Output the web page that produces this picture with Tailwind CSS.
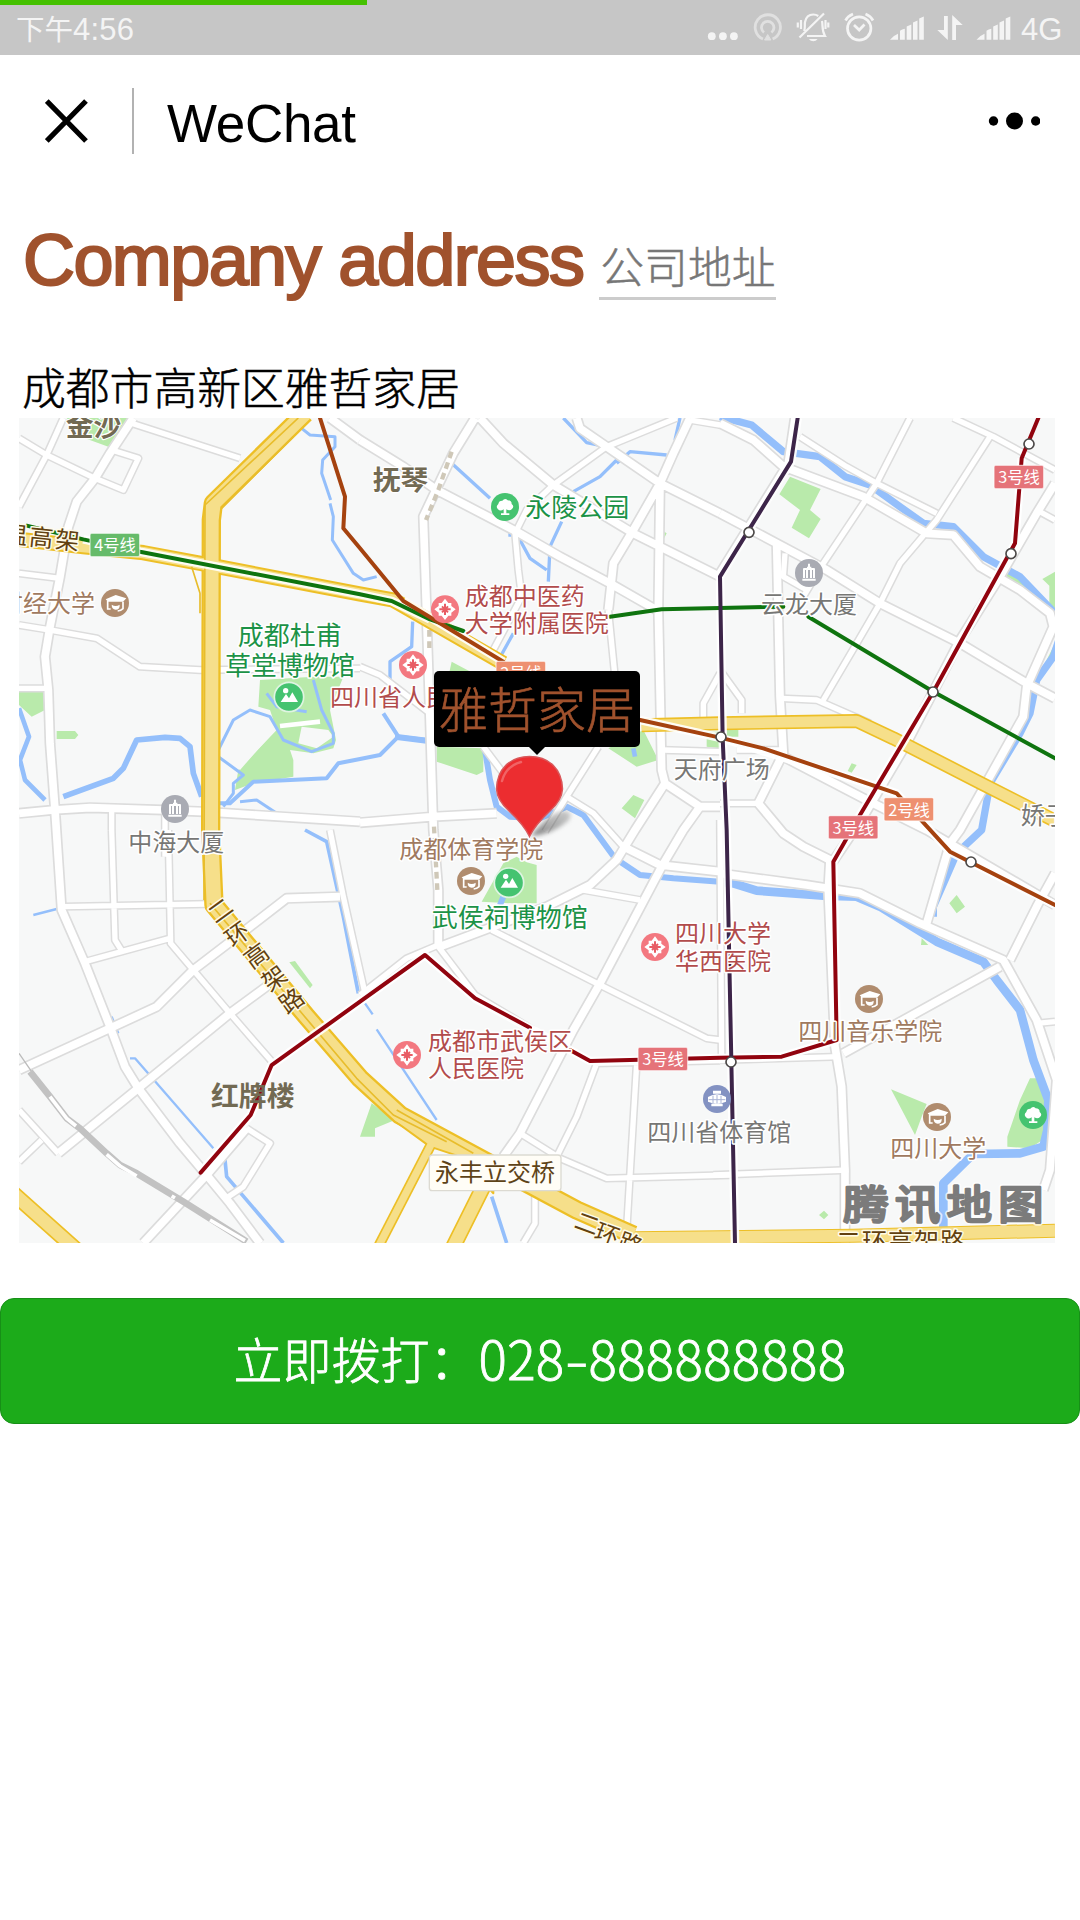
<!DOCTYPE html>
<html lang="zh-CN">
<head>
<meta charset="utf-8">
<title>WeChat</title>
<script src="https://cdn.jsdelivr.net/npm/@tailwindcss/browser@4"></script>
</head>
<body class="flex h-[1920px] w-[1080px] flex-col overflow-hidden bg-white font-['Liberation_Sans','Noto_Sans_CJK_SC',sans-serif] text-black">

<!-- Status bar -->
<div class="relative flex h-[55px] shrink-0 items-center justify-between bg-[#c6c6c6] pl-4 text-[31px] text-[#f4f4f4]">
  <div class="absolute top-0 left-0 h-[5px] w-[367px] bg-[#45c101]"></div>
  <div class="flex items-baseline pt-1 leading-[50px]"><span class="text-[28.500px]">下午</span><span class="tracking-[0.2px]">4:56</span></div>
  <div class="flex h-[55px] items-center">
    <svg class="h-[55px] w-[45px]" viewBox="705 0 45 55" fill="#f4f4f4"><circle cx="711.8" cy="36.2" r="3.9"/><circle cx="722.9" cy="36.2" r="3.9"/><circle cx="733.9" cy="36.2" r="3.9"/></svg>
    <svg class="h-[55px] w-[40px]" viewBox="750 0 40 55" fill="none" stroke="#e0e0e0" stroke-width="2.8"><path d="M763 39a12.6 12.6 0 1 1 9.6 0M764 32.5a6.2 6.2 0 1 1 7.4 0"/><path d="M767.7 34.5l3.2 5.5h-6.4z" fill="#e0e0e0" stroke-width="1"/></svg>
    <svg class="h-[55px] w-[45px]" viewBox="790 0 45 55" fill="none" stroke="#f4f4f4" stroke-width="2.2"><path d="M804 31c1.500-3 .5-6 1-9 1-5 4-7.500 8.300-7.500 2 0 3.500.5 5 1.500M822 21c1 4-.5 9 3 15h-18M824 13.500L799.500 37.500M801 20v9M797.800 22.500v5M825.500 20v9M828.300 22.500v5"/><path d="M809 39h8.500c-2 3-6.500 3-8.500 0z" fill="#f4f4f4" stroke="none"/></svg>
    <svg class="h-[55px] w-[50px]" viewBox="835 0 50 55" fill="none" stroke="#f4f4f4" stroke-width="2.700"><circle cx="859.200" cy="28.500" r="11.700"/><path d="M845.500 20.500q2.500-4.500 7.500-6.500M873 20.500q-2.500-4.500-7.500-6.500M854 25l5.200 5 5.300-5.500"/></svg>
    <svg class="h-[55px] w-[45px]" viewBox="885 0 45 55" fill="#f4f4f4"><path id="signal" d="M890 39.700q3-4 8-6v6zM900 39.700v-9q2-1.500 4.800-2v11zM906.700 39.700V26.500l4.600-2v15.200zM913 39.700V22.500l4.500-2v19.200zM919.200 39.700V18.500l4.600-2v23.200z"/></svg>
    <svg class="h-[55px] w-[42px]" viewBox="930 0 42 55" fill="#f4f4f4"><path d="M944 16h3.800v24L937.300 30H944zM952.200 40V15l10.500 10H956v15z"/></svg>
    <svg class="h-[55px] w-[48px]" viewBox="971.5 0 48 55" fill="#f4f4f4"><use href="#signal" x="86"/></svg>
    <span class="w-[60px] pt-1.5 pl-px">4G</span>
  </div>
</div>

<!-- Title bar -->
<header class="flex h-[132px] shrink-0 items-center pr-[40px] pl-[45px]">
  <svg class="h-[44px] w-[44px]" viewBox="0 0 44 44" stroke="#000" stroke-width="5.200"><path d="M1.800 2L41 42M41 2L1.800 42"/></svg>
  <div class="ml-[43px] h-[66px] w-[2px] bg-[#b2b2b2]"></div>
  <div class="ml-[33px] grow pt-1 text-[53px] leading-none tracking-[-0.3px]">WeChat</div>
  <svg class="h-[20px] w-[52px]" viewBox="0 0 52 20"><circle cx="5.500" cy="10" r="4.700"/><circle cx="26.500" cy="10" r="8.500"/><circle cx="47.700" cy="10" r="4.700"/></svg>
</header>

<main class="flex flex-col">
  <h1 class="flex h-[113px] items-start pt-[33px] pl-[23px]">
    <span class="text-[72px] leading-[80px] tracking-[-1.600px] text-[#a0522d] [-webkit-text-stroke:2.2px_#a0522d]">Company address</span>
    <span class="mt-[19px] ml-[16px] h-[61px] border-b-[3px] border-[#ccc] pl-px text-[43.800px] leading-[59px] font-light text-[#777] [-webkit-text-stroke:0.5px_#777]">公司地址</span>
  </h1>
  <p class="h-[118px] pt-[61px] pl-[22px] text-[43.800px] leading-[58px] font-light [-webkit-text-stroke:0.5px_#000]">成都市高新区雅哲家居</p>

  <!-- Map -->
  <section class="relative ml-[19px] h-[825px] w-[1036px] overflow-hidden bg-[#f7f8f8]">
    <svg class="block h-[825px] w-[1036px]" viewBox="57 1254 3108 2475" font-family="'Noto Sans CJK SC',sans-serif" fill="none" stroke-linejoin="round">
      <defs>
        <g id="minor">
          <path transform="translate(0 1230)" d="M57 85L140 135 285 205 370 240 415 145 335 120M190 24L140 135 57 290M390 38L720 145M57 490L180 505M57 645L150 660 290 685 420 770 600 780 1080 775M57 835H145M335 1205V1260M495 1205V1340"/>
          <path transform="translate(1080 1230)" d="M0 770L60 795 210 910M950 24L740 110 580 225 500 300 465 370 475 480 485 560 400 720M745 600L765 800M990 30L1080 45M370 1010L430 1090M715 1010L620 1160 555 1265M620 1160L700 1210 790 1310M910 1020L1080 1025M1030 960V880L1080 790"/>
          <path transform="translate(2160 1230)" d="M570 24L470 220 310 460 250 560M240 80L380 170 470 220 650 310M700 24L820 80 1005 180M810 80L650 330 540 460 480 580 410 700 310 870M195 430L190 500 260 540M185 865L290 870 450 940M950 300L1005 330M0 780L65 870V910M50 1020H190M0 1180H115"/>
          <path transform="translate(0 2490)" d="M335 0L345 330 370 370M505 0L512 340 580 420 690 550 820 700M190 230L620 222M255 395L510 325M57 840L175 970M57 995L125 930M740 895L810 940 730 1070 685 1100M990 0L1030 200 1095 490"/>
          <path transform="translate(1080 2490)" d="M395 300L720 465 1040 625 1080 630M480 910L600 985 740 1045 1110 1035M710 700L650 860 590 980M830 700L800 1200M235 350L345 495 520 600M525 1080V1180L490 1239M670 180L840 210M700 700L1080 692M0 495L140 385 235 345"/>
          <path transform="translate(2160 2490)" d="M-20 1035L385 1020M0 690L360 680M1005 575L950 580M0 -30L5 700"/>
        </g>
        <g id="major">
          <path transform="translate(0 1230)" d="M400 24L330 130 285 205 230 275 205 350 180 500 150 650 135 740 145 840 150 1000 165 1200 185 1500 255 1660 330 1850 375 1970 415 2035 540 2200 620 2295 690 2380 780 2500M57 1210L160 1200 270 1193 490 1200 610 1205 1080 1235M990 24L1080 90"/>
          <path transform="translate(1080 1230)" d="M0 90L130 170 230 240 470 365 600 440 750 520 890 600M345 24L280 130 190 320 200 620 210 930 220 1260 235 1440V1610M0 1238L220 1220 410 1210M360 24L430 100 580 225 820 370 1080 500M650 24L660 55 740 110 900 220 1080 310M990 24L940 130 900 220 820 360 760 460 745 600M900 220L895 600 905 1080 915 1120 1020 1190H1080M915 1120L825 1260 770 1350 690 1425 560 1490 240 1610M1020 1190L970 1260 905 1370 720 1720 640 1860 480 2170 430 2240M790 1310L900 1365 1080 1385"/>
          <path transform="translate(2160 1230)" d="M0 40L100 90 190 170 430 260 620 370 700 375 780 470 900 540 990 610 1000 650 920 830 910 920 720 1260 690 1300 620 1540M0 310L170 400 320 480 480 580 720 700 920 820 1005 865M170 400L180 860 190 1030 115 1180 190 1270 250 1310 330 1350M1005 220L950 310 840 500 720 690 560 1000 430 1220 335 1360M190 1040L440 1170 620 1260 1005 1485M225 24L205 160 0 490M0 1390L260 1425 420 1450 600 1540 850 1650 950 1830 1010 2010 990 2280 970 2340"/>
          <path transform="translate(0 2490)" d="M57 720L330 595 470 530 580 420 750 290 860 205 1020 200M175 970L415 775 690 550 840 440M430 1239L620 1035 740 895"/>
          <path transform="translate(2160 2490)" d="M330 90L325 180 345 650 365 770 375 1020V1239M1005 130L950 230 870 390M840 410L370 670"/>
        </g>
        <g id="ring">
          <path d="M915 1240L640 1510 634 1560 632 2490 642 2715 920 3050 1080 3235 1200 3345 1450 3480 1730 3630 1900 3705" stroke-width="44"/>
          <path d="M1900 3715L2560 3707 3165 3692" stroke-width="36"/>
          <path d="M1925 2176L2160 2170 2570 2163 2680 2215 2940 2348 3170 2465" stroke-width="32"/>
          <path d="M57 1618L250 1640 430 1658 600 1690 1080 1782 1180 1800 1510 1990" stroke-width="34"/>
          <path d="M40 3580L230 3750M1450 3560L1360 3740" stroke-width="38"/>
          <path d="M1295 3430L1135 3740" stroke-width="22"/>
        </g>
        <g id="metro">
          <path stroke="#0f740f" d="M80 1577L250 1618 420 1655 1080 1783 1175 1803 1290 1858 1390 1893M1830 1850L1985 1828 2160 1824 2350 1820M2425 1850L2800 2075 3165 2275"/>
          <path stroke="#a5420f" d="M960 1254L1035 1490 1030 1585 1080 1645 1210 1803 1510 1985M1920 2160L2160 2213 2290 2245 2630 2360 2690 2380 2850 2555 3165 2715"/>
          <path stroke="#91040f" d="M3115 1254L3065 1375 3045 1630 2800 2075 2580 2445 2500 2585 2510 3120 2345 3170 2160 3173 1770 3183 1710 3150M1590 3083L1425 2995 1275 2865 815 3195 752 3345 602 3518"/>
          <path stroke="#3d2549" d="M2393 1254L2373 1385 2160 1730 2168 2215 2180 2490 2205 3729"/>
        </g>
        <g id="hospital"><circle r="42" fill="#f37880"/><path d="M0-32L10-19 19-19 19-10 32 0 19 10 19 19 10 19 0 32-10 19-19 19-19 10-32 0-19-10-19-19-10-19z" fill="#fff"/><path d="M0-17V17M-17 0H17M-9-9L9 9M9-9L-9 9" stroke="#e85c64" stroke-width="6"/></g>
        <g id="school"><circle r="42" fill="#b08c6e"/><path d="M-22-8V20M-22 18H-13M24-4V17Q18 23 8 24" stroke="#fff" stroke-width="5"/><path d="M-28-11L2-24 34-14 24-4H-20z" fill="#fff"/><path d="M-10 5Q2 13 14 5Q15 20 2 20Q-10 19-10 5z" fill="#fff"/></g>
        <g id="tree"><circle r="42" fill="#45c370"/><path d="M-4 7Q-14 14-21 7Q-29-1-20-9Q-19-19-8-19Q0-28 8-20Q20-20 20-9Q29-2 21 6Q14 13 4 7V19H13V24H-12V19H-4z" fill="#fff"/></g>
        <g id="sight"><circle r="44" fill="#45c370" stroke="#dff4e2" stroke-width="5"/><circle cx="-10" cy="-19" r="8" fill="#fff"/><path d="M-25 15L-9-9 0 4 10-14 27 15z" fill="#fff"/></g>
        <g id="building"><circle r="42" fill="#a9abb3"/><path d="M-20 20H20M-15 15V-12H15V15M-6-16H7M-6-10V15M6-10V15M0-28V-18" stroke="#fff" stroke-width="6"/></g>
        <g id="stop"><circle r="15" fill="#fff" stroke="#4c4948" stroke-width="5"/></g>
      </defs>

      <!-- Parks -->
      <g fill="#b9eaab">
        <path transform="translate(0 1230)" d="M200 24H390L325 110 255 85zM57 845H135V900L95 920 57 885zM170 963H225L235 975 225 987H170zM780 810L940 800H1030L990 900 1008 990 1000 1015 940 1030 870 1020 880 1050V1100L760 1120 705 1140 715 1080 830 960 810 900 775 890z"/>
        <path transform="translate(1080 1230)" d="M275 755L360 800H265zM230 1010L370 1015V1085L350 1095 230 1055zM745 1015L850 960 895 1050 830 1070zM820 1155L853 1170 825 1225 785 1195zM905 360L920 370 905 400zM1040 965H1080V1015L1040 1010z"/>
        <path transform="translate(2160 1230)" d="M210 200L302 237 270 300 302 327 267 385 215 353 240 300 178 253zM1005 485L967 507 988 527V590L1005 620zM395 1060L410 1065 395 1088 383 1083zM840 480L900 505 970 580 850 500zM20 960H55V980H20zM1005 700L975 760 1005 740z"/>
        <path transform="translate(0 2490)" d="M868 397L885 393 938 465 930 475z"/>
        <path transform="translate(1080 2490)" d="M430 100L470 80 500 97 530 105V220H460L365 215zM0 920L35 820 105 870 45 895V920z"/>
        <path transform="translate(2160 2490)" d="M513 778L620 822 605 860 585 915zM930 745H950L985 820 975 925 930 955 862 950V920L900 810zM710 195L735 230 710 250 688 220zM312 1142L325 1155 312 1168 297 1155zM605 325L625 345H603z"/>
      </g>
      <path d="M905 2180L985 2190 1000 2210 950 2245 895 2230zM705 2150L755 2135 805 2145 825 2190 720 2310 665 2260z" fill="#f7f8f8"/>
      <path d="M840 2178L960 2165" stroke="#fff" stroke-width="14"/>

      <!-- Rivers -->
      <g stroke="#94bffb">
        <g transform="translate(0 1230)"><path stroke-width="14" d="M57 895L87 980 60 1050 75 1110 135 1170"/><path stroke-width="17" d="M190 1160L340 1105 370 1075 410 990 495 982 540 985 570 1010 580 1090 605 1160"/><path stroke-width="12" d="M655 1180H690L760 1115 980 1105 1015 1060 1080 1047 1140 1035 1195 980 1280 990M1195 980L1150 910"/><path stroke-width="9" d="M905 55L930 75 1005 80V110L968 150 965 190 992 270M990 280L1000 320 997 390 1060 490 1090 510 1130 500M655 1020L700 930 750 900 810 920 850 990 935 1025 1000 1000V970L965 900 940 810M655 1040L730 1095 700 1120V1150L670 1190M720 1175L770 1170 830 1210 890 1232M800 850L830 890 920 905"/></g>
        <g transform="translate(1080 1230)"><path stroke-width="10" d="M610 24L680 98 730 108M275 160L390 265M770 150L720 200 640 245M920 135L810 125 770 160M960 24L945 90M605 335L570 410 565 515M450 365V380M480 390L510 445 560 480M460 670L410 760M158 635L155 710 90 755V815"/><path stroke-width="18" d="M375 1020L390 1110 410 1190 450 1220 540 1225 620 1190 670 1215 765 1345 840 1395 940 1405 1080 1415M105 980L200 992"/><path d="M820 1015L825 1040" stroke-width="14"/></g>
        <g transform="translate(2160 1230)"><path stroke-width="22" d="M0 20L95 45 190 125 300 140 375 200 450 225 540 290 610 340 700 350 790 440 900 500 1010 615M1020 680L1000 740 950 810 930 910 900 970 810 1120 785 1260 710 1330 640 1490V1520" stroke-linejoin="round"/></g>
        <path transform="translate(2160 2490)" stroke-width="26" d="M0 155L40 160 110 182 310 197 410 200 480 230 650 335 790 395 830 450 900 540 940 690 985 810 982 900 970 950 900 970 760 972 670 1060V1190"/>
        <g transform="translate(0 2490)" stroke-width="7"><path d="M100 255L170 237M335 560L355 610M390 685H405L640 955M1095 520L1118 553M1130 598L1310 870"/><path stroke-width="11" d="M675 990L680 1040 850 1239M915 0L980 35 1030 260 1075 490M1475 1100L1520 1239"/><path d="M1500 225L1510 200" stroke-width="18"/></g>
      </g>

      <!-- Streets -->
      <use href="#minor" stroke="#dcdcdc" stroke-width="25"/>
      <use href="#major" stroke="#dcdcdc" stroke-width="33"/>
      <use href="#minor" stroke="#fff" stroke-width="16"/>
      <use href="#major" stroke="#fff" stroke-width="23"/>

      <!-- Railway -->
      <g transform="translate(0 2490)"><path d="M57 670L95 725" stroke="#bbb" stroke-width="4"/><path d="M90 725L150 800 200 865 240 895 320 970 360 1005 410 1030 550 1115 740 1235" stroke="#c2c2c2" stroke-width="20"/><path d="M150 800L200 865 228 888M320 973L360 1008 410 1038M515 1098L525 1104M630 1170L735 1232" stroke="#fff" stroke-width="11"/></g>
      <path d="M1355 1355L1315 1470 1278 1560M1288 1890V1950M1302 2480L1312 2670" stroke="#cfc8b8" stroke-width="13" stroke-dasharray="20 14"/>

      <!-- Expressways -->
      <g stroke="#edbf26"><path d="M915 1240L640 1510 634 1560 632 2490 642 2715 920 3050 1080 3235 1200 3345 1450 3480 1730 3630 1900 3705" stroke-width="58"/><path d="M1900 3715L2560 3707 3165 3692" stroke-width="42"/><path d="M1925 2176L2160 2170 2570 2163 2680 2215 2940 2348 3170 2465" stroke-width="42"/><path d="M57 1618L250 1640 430 1658 600 1690 1080 1782 1180 1800 1510 1990" stroke-width="46"/><path d="M40 3580L230 3750M1450 3560L1360 3740" stroke-width="48"/><path d="M1295 3430L1135 3740" stroke-width="32"/></g>
      <path d="M1180 3310L1290 3375 1480 3470 1480 3580 1380 3470 1290 3440 1180 3360z" fill="#f6df8a" stroke="#edbf26" stroke-width="6"/>
      <use href="#ring" stroke="#f6df8a"/>
      <path d="M895 1254L615 1515 612 2700M880 1310L665 1525M575 1700L600 1780V1840M630 2710L910 3045 1070 3235 1180 3345 1340 3425M1190 3330L1420 3460" stroke="#e8bd2c" stroke-width="5"/>

      <!-- Metro lines -->
      <path d="M250 1618L420 1655 1080 1783 1175 1803 1290 1858M1210 1803L1510 1985M1920 2160L2160 2213 2630 2360 2690 2380 2850 2555 3165 2715M3065 1375L3045 1630 2800 2075 2580 2445 2500 2585 2510 3120 2345 3170 1770 3183 1425 2995 1275 2865 815 3195 752 3345 602 3518M2393 1254L2373 1385 2160 1730 2168 2215 2180 2490 2205 3729" stroke="#fff" stroke-opacity=".9" stroke-width="26"/><use href="#metro" stroke-width="12" stroke-linecap="round"/>
      <use href="#stop" x="3087" y="1332"/><use href="#stop" x="3033" y="1661"/><use href="#stop" x="2247" y="1597"/><use href="#stop" x="2799" y="2076"/><use href="#stop" x="2163" y="2211"/><use href="#stop" x="2913" y="2586"/><use href="#stop" x="2193" y="3186"/>

      <!-- Places -->
      <use href="#school" x="345" y="1809"/><use href="#sight" x="867" y="2091"/><use href="#building" x="525" y="2427"/><use href="#tree" x="1515" y="1521"/><use href="#hospital" x="1335" y="1828"/><use href="#hospital" x="1239" y="1995"/><use href="#building" x="2427" y="1719"/>
      <use href="#school" x="1413" y="2643"/><use href="#sight" x="1527" y="2648"/><use href="#hospital" x="1965" y="2841"/><use href="#hospital" x="1221" y="3165"/><use href="#school" x="2607" y="2997"/><use href="#school" x="2811" y="3351"/><use href="#tree" x="3099" y="3345"/>
      <g transform="translate(2151 3297)"><circle r="42" fill="#8392c2"/><path d="M-27-6Q0-22 27-6V8Q0 20-27 8zM-17 14H17V22H-17zM-12-25H12V-16H-12z" fill="#fff"/><path d="M-25 2H25M-12-10V12M0-12V14M12-10V12" stroke="#a9b4d5" stroke-width="3"/></g>

      <g font-size="72" stroke="#fff" stroke-width="9" paint-order="stroke">
        <g fill="#726a53" font-size="83.500" font-weight="700" stroke-width="7"><text x="197" y="1308">金沙</text><text x="1118" y="1470">抚琴</text><text x="633" y="3317" stroke="none">红牌楼</text></g>
        <g fill="#a07a60"><text x="-3" y="1835">财经大学</text><text x="1198" y="2574">成都体育学院</text><text x="2395" y="3119">四川音乐学院</text><text x="2671" y="3472">四川大学</text></g>
        <g fill="#1c9347" font-size="78"><text x="713" y="1935">成都杜甫</text><text x="675" y="2024">草堂博物馆</text><text x="1576" y="1551">永陵公园</text><text x="1295" y="2782">武侯祠博物馆</text></g>
        <g fill="#b24c4c"><text x="990" y="2118">四川省人民医院</text><text x="1394" y="1815">成都中医药</text><text x="1394" y="1895">大学附属医院</text><text x="2025" y="2825">四川大学</text><text x="2025" y="2909">华西医院</text><text x="1284" y="3149">成都市武侯区</text><text x="1284" y="3232">人民医院</text></g>
        <g fill="#777775"><text x="385" y="2552">中海大厦</text><text x="2021" y="2335">天府广场</text><text x="2283" y="1840">云龙大厦</text><text x="3062" y="2472">娇子</text><text x="1942" y="3422">四川省体育馆</text></g>
        <g fill="#62410f" stroke="#fffbe8">
          <text transform="translate(8 1627) rotate(6)" letter-spacing="6">温高架</text>
          <g text-anchor="middle"><text transform="translate(676 2752) rotate(-36)">二</text><text transform="translate(727 2824) rotate(-36)">环</text><text transform="translate(784 2888) rotate(-36)">高</text><text transform="translate(838 2956) rotate(-36)">架</text><text transform="translate(890 3023) rotate(-36)">路</text>
          <text transform="translate(1753 3695) rotate(20)">二</text><text transform="translate(1812 3728) rotate(20)">环</text><text transform="translate(1882 3757) rotate(20)">路</text></g>
          <text x="2508" y="3752" font-size="75" letter-spacing="3">二环高架路</text>
        </g>
      </g>

      <!-- Line badges -->
      <g stroke="#fff" stroke-opacity=".6" stroke-width="4"><rect x="270" y="1600" width="149" height="70" rx="5" fill="#66bb6a"/><rect x="1488" y="1984" width="149" height="70" rx="5" fill="#ee9070"/><rect x="2982" y="1396" width="149" height="70" rx="5" fill="#e57379"/><rect x="2652" y="2393" width="149" height="70" rx="5" fill="#ee9070"/><rect x="2485" y="2447" width="149" height="70" rx="5" fill="#e57379"/><rect x="1914" y="3142" width="149" height="70" rx="5" fill="#e57379"/></g>
      <g font-size="49" fill="#fff" text-anchor="middle"><text x="345" y="1654">4号线</text><text x="1563" y="2038">2号线</text><text x="3057" y="1450">3号线</text><text x="2727" y="2447">2号线</text><text x="2560" y="2501">3号线</text><text x="1989" y="3196">3号线</text></g>
      <rect x="1288" y="3465" width="395" height="107" rx="9" fill="#fffdf6" stroke="#dcdad2" stroke-width="4"/>
      <text x="1305" y="3544" font-size="72" fill="#5e4318">永丰立交桥</text>

      <!-- Map provider mark -->
      <g font-size="136" font-weight="400" letter-spacing="19" stroke-linejoin="round"><text transform="translate(2530 3657) scale(1 .88)" fill="#707070" stroke="#fff" stroke-width="20" stroke-opacity=".7">腾讯地图</text><text transform="translate(2530 3657) scale(1 .88)" fill="#808080" stroke="#7b7b7b" stroke-width="9">腾讯地图</text></g>
    </svg>

    <!-- Marker -->
    <svg class="absolute top-[335px] left-[472px] h-[90px] w-[90px]" viewBox="0 0 90 90">
      <defs><linearGradient id="shade" x1="0" x2="1" y1="1" y2="0"><stop offset="0" stop-color="#333" stop-opacity=".6"/><stop offset="1" stop-color="#777" stop-opacity=".35"/></linearGradient></defs>
      <path class="blur-[2px]" d="M40 83Q60 82 77 68 84 58 72 58 58 60 40 83z" fill="url(#shade)"/>
      <path d="M38.500 83.500Q33 72 18 58 6 47 5.500 36C6 16 19 3.500 38.500 3.500S71 16 71.500 36Q71 47 59 58 44 72 38.500 83.500z" fill="#ec2d30" stroke="#d9585b" stroke-width="1.500"/>
      <path d="M11 28Q15 13 30 9" fill="none" stroke="#f59a9a" stroke-width="2.500" stroke-linecap="round" opacity=".5"/>
    </svg>
    <div class="absolute top-[253px] left-[415px] flex h-[76px] w-[206px] items-center justify-center rounded-[5px] bg-black text-[49px] leading-none font-light text-[#a0522d] [-webkit-text-stroke:0.6px_#a0522d]">
      <span class="relative top-[2px]">雅哲家居</span>
      <svg class="absolute top-full left-[95px] h-[8px] w-[16px]" viewBox="0 0 16 8"><path d="M0 0H16L8 8z"/></svg>
    </div>
  </section>

  <!-- Call button -->
  <a class="mt-[55px] flex h-[126px] items-center justify-center rounded-[14px] border border-[#178f17] bg-[#1cab1a] pb-[7px] font-['Noto_Sans_CJK_SC',sans-serif] text-[49px] leading-none font-light text-white [-webkit-text-stroke:0.8px_#fff]">
    <span>立即拨打：</span><span class="flex items-center text-[53px] tracking-[0.300px]">028<span class="inline-block w-[24px] scale-x-[1.3] text-center">-</span>888888888</span>
  </a>
</main>
</body>
</html>
